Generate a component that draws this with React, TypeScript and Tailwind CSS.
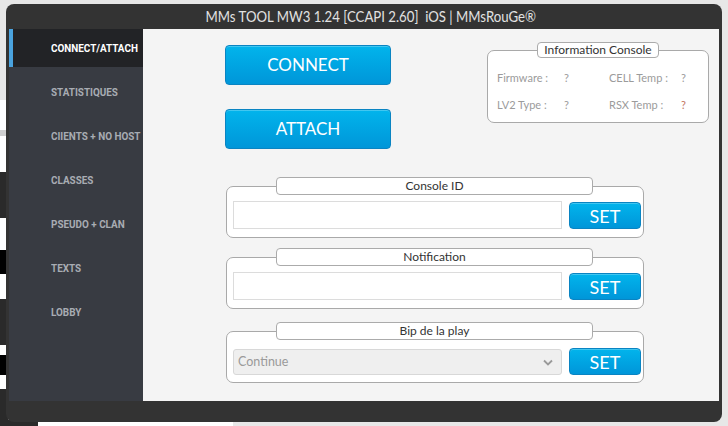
import React from 'react';

const menu = [
    'CONNECT/ATTACH',
    'STATISTIQUES',
    'CIIENTS + NO HOST',
    'CLASSES',
    'PSEUDO + CLAN',
    'TEXTS',
    'LOBBY',
];

const blueBtn =
    'rounded-[4px] border border-[#0a84c2] bg-gradient-to-b from-[#02b4ec] to-[#0096d9] text-white shadow-[inset_0_1px_0_rgba(255,255,255,0.25)]';

interface GroupProps {
    title: string;
    tight?: boolean;
    children: React.ReactNode;
}

const Group = ({ title, tight, children }: GroupProps) => {
    return (
        <div className="flex flex-col">
            <div className="relative z-10 ml-[50px] flex h-[18px] w-[317px] items-center justify-center rounded-[4px] border border-[#ababab] bg-white text-[12px] text-[#333]">
                {title}
            </div>
            <div
                className={
                    tight
                        ? '-mt-[9px] flex h-[52px] w-[418px] items-end gap-[7px] rounded-[7px] border border-[#a9a9a9] bg-white pb-[7px] pl-[6px] pr-[2px]'
                        : '-mt-[9px] flex h-[52px] w-[418px] items-end gap-[7px] rounded-[7px] border border-[#a9a9a9] bg-white pb-[8px] pl-[6px] pr-[2px]'
                }
            >
                {children}
            </div>
        </div>
    );
};

const SetButton = () => (
    <button className={`${blueBtn} flex h-[27px] w-[72px] items-center justify-center text-[18px] leading-none`}>
        SET
    </button>
);

const InfoRow = ({ a, b, bValueClass }: { a: string; b: string; bValueClass?: string }) => (
    <div className="flex items-center text-[11px] text-[#9b9b9b]">
        <span className="w-[67px]">{a}</span>
        <span className="w-[45px]">?</span>
        <span className="w-[72px]">{b}</span>
        <span className={bValueClass}>?</span>
    </div>
);

const App = () => {
    return (
        <div
            className="relative h-[426px] w-[728px] overflow-hidden bg-[#e7e7e7]"
            style={{ fontFamily: 'Lato, "Open Sans", sans-serif' }}
        >
            {/* page peeking out behind the window */}
            <div className="flex h-full w-[8px] flex-col">
                <div className="h-[100px] bg-[#e7e7e7]" />
                <div className="h-[30px] bg-white" />
                <div className="h-[6px] bg-[#cfcfcf]" />
                <div className="h-[36px] bg-white" />
                <div className="h-[46px] bg-[#2a2a2a]" />
                <div className="h-[32px] bg-white" />
                <div className="h-[24px] bg-black" />
                <div className="h-[25px] bg-white" />
                <div className="h-[46px] bg-[#2a2a2a]" />
                <div className="h-[10px] bg-white" />
                <div className="h-[20px] bg-black" />
                <div className="h-[14px] bg-white" />
                <div className="flex-1 bg-[#2a2a2a]" />
            </div>
            <div className="absolute bottom-0 left-[8px] h-[6px] w-[30px] bg-[#2a2a2a]" />
            <div className="absolute bottom-0 left-[38px] h-[6px] w-[195px] bg-white" />

            {/* app window */}
            <div className="absolute left-[6px] top-[4px] flex h-[418px] w-[716px] flex-col overflow-hidden rounded-[8px] bg-[#333333]">
                <div className="flex h-[25px] items-center justify-center pl-[14px] text-[15px] text-[#e2e2e2]">
                    <span className="inline-block scale-x-[0.88] whitespace-nowrap">
                        MMs TOOL MW3 1.24 [CCAPI 2.60]&nbsp; iOS | MMsRouGe®
                    </span>
                </div>
                <div className="flex flex-1 px-[3px]">
                    <nav className="w-[134px] bg-[#383b42]" style={{ fontFamily: 'Roboto, sans-serif' }}>
                        {menu.map((item, i) => (
                            <div
                                key={item}
                                className={
                                    i === 0
                                        ? 'mb-[6px] flex h-[38px] items-center whitespace-nowrap border-l-4 border-[#4aa3df] bg-[#222326] pl-[38px] pt-[3px] text-[11px] font-bold text-white'
                                        : 'mb-[6px] flex h-[38px] items-center whitespace-nowrap pl-[42px] pt-[3px] text-[11px] font-bold text-[#a8acb3]'
                                }
                            >
                                <span className="inline-block origin-left scale-x-[0.9]">{item}</span>
                            </div>
                        ))}
                    </nav>
                    <main className="flex flex-1 flex-col bg-[#f4f4f4]">
                        <div className="flex">
                            <div className="ml-[82px] mt-[16px] flex flex-col gap-[24px]">
                                <button className={`${blueBtn} flex h-[40px] w-[166px] items-center justify-center text-[17px]`}>
                                    CONNECT
                                </button>
                                <button className={`${blueBtn} flex h-[40px] w-[166px] items-center justify-center text-[17px]`}>
                                    ATTACH
                                </button>
                            </div>
                            <div className="ml-auto mr-[10px] mt-[13px] flex flex-col">
                                <div className="relative z-10 mx-auto flex h-[16px] w-[122px] items-center justify-center rounded-[4px] border border-[#ababab] bg-white text-[12px] text-[#333]">
                                    Information Console
                                </div>
                                <div className="-mt-[8px] flex h-[73px] w-[222px] flex-col gap-[10px] rounded-[7px] border border-[#a9a9a9] bg-white pl-[9px] pt-[19px]">
                                    <InfoRow a="Firmware :" b="CELL Temp :" />
                                    <InfoRow a="LV2 Type :" b="RSX Temp :" bValueClass="text-[#c3765f]" />
                                </div>
                            </div>
                        </div>
                        <div className="ml-[83px] mt-[28px] flex flex-col gap-[10px]">
                            <Group title="Console ID">
                                <input className="h-[28px] w-[329px] border border-[#dcdcdc] bg-white outline-none" />
                                <SetButton />
                            </Group>
                            <Group title="Notification">
                                <input className="h-[28px] w-[329px] border border-[#dcdcdc] bg-white outline-none" />
                                <SetButton />
                            </Group>
                            <div className="mt-[3px]">
                                <Group title="Bip de la play" tight>
                                    <div className="flex h-[26px] w-[329px] items-center justify-between rounded-[3px] border border-[#d8d8d8] bg-[#efefef] pl-[4px] pr-[8px] text-[12.5px] text-[#9a9a9a]">
                                        <span>Continue</span>
                                        <svg width="10" height="7" viewBox="0 0 10 7" fill="none">
                                            <path d="M1 1.5L5 5.5L9 1.5" stroke="#9a9a9a" strokeWidth="1.8" />
                                        </svg>
                                    </div>
                                    <SetButton />
                                </Group>
                            </div>
                        </div>
                    </main>
                </div>
                <div className="h-[21px]" />
            </div>
        </div>
    );
};

export default App;
